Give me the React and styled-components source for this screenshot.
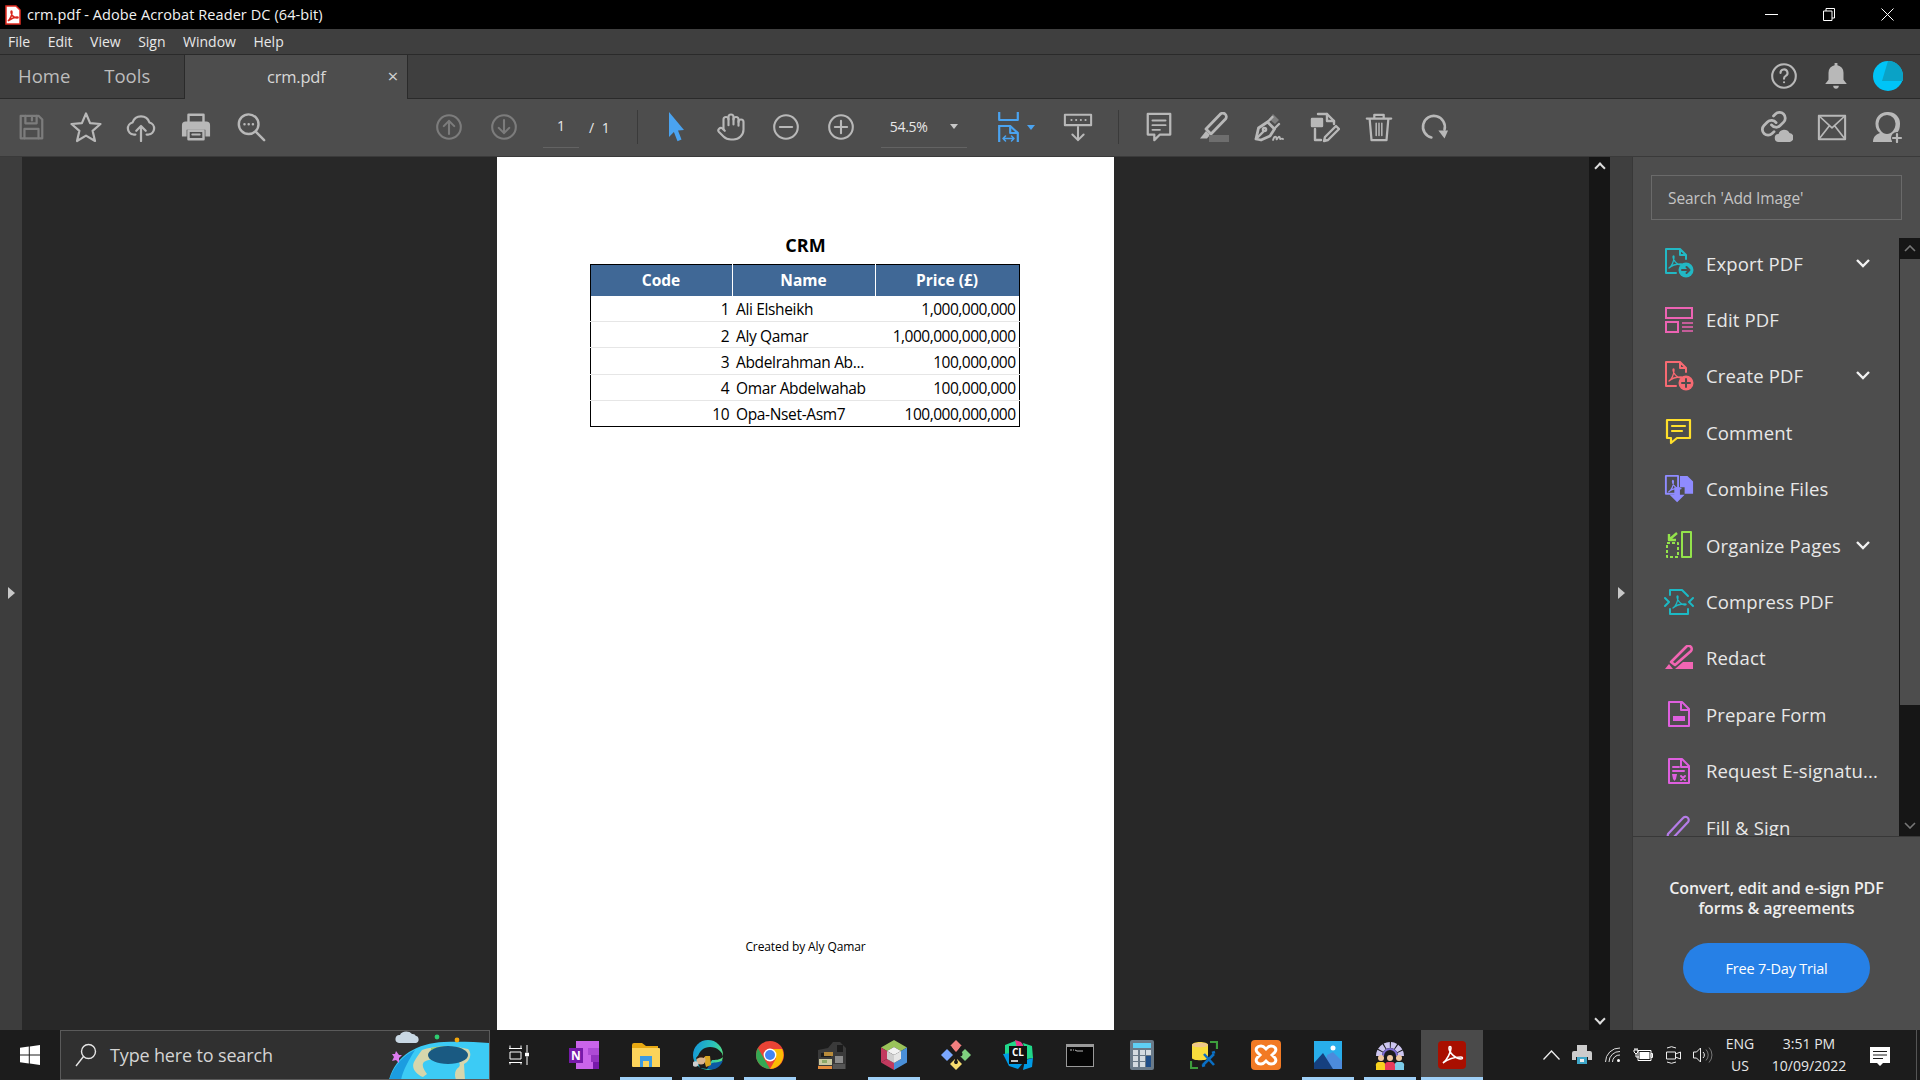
import React from "react"
import styled, { createGlobalStyle } from "styled-components"
import { Hand } from "lucide-react"

const FONT = `"Open Sans", "Noto Sans", sans-serif`

const GlobalStyle = createGlobalStyle`
  html, body {
    margin: 0;
    padding: 0;
    background: #282828;
    font-family: ${FONT};
  }
  * {
    box-sizing: border-box;
  }
`

const Ico = ({ size = 32, w = 32, h = 32, sw = 2.4, children, ...rest }) => (
  <svg
    width={size}
    height={(size * h) / w}
    viewBox={`0 0 ${w} ${h}`}
    fill="none"
    stroke="currentColor"
    strokeWidth={sw}
    strokeLinecap="round"
    strokeLinejoin="round"
    {...rest}
  >
    {children}
  </svg>
)

// toolbar icons
const SaveIcon = () => (
  <Ico size={30}>
    <path d="M5 4h19l4 4v20H5z" />
    <path d="M10 4v8h12V4M9 28V18h15v10M17 6v3" />
  </Ico>
)
const StarIcon = () => (
  <Ico size={32} sw={2.2}>
    <path d="M16 2.5l4.1 9.6 10.4.9-7.9 6.8 2.4 10.2-9-5.4-9 5.4 2.4-10.2L1.5 13l10.4-.9z" />
  </Ico>
)
const UploadIcon = () => (
  <Ico size={30}>
    <path d="M10 24H8a6.5 6.5 0 0 1-1-12.8 9.5 9.5 0 0 1 18 0A6.5 6.5 0 0 1 24 24h-2" />
    <path d="M16 31V15M11 20l5-5 5 5" />
  </Ico>
)
const PrintIcon = () => (
  <Ico size={30} sw={2.6}>
    <path d="M8 11V3h16v8" />
    <path fill="currentColor" stroke="none" d="M5 10h22a4 4 0 0 1 4 4v12h-5v-7H6v7H1V14a4 4 0 0 1 4-4z" />
    <path d="M8 20h16v9H8z" />
    <path d="M12 24h8" strokeWidth={2} />
  </Ico>
)
const FindIcon = () => (
  <Ico size={30} sw={2.6}>
    <circle cx="13.5" cy="13" r="10.5" />
    <path d="M21 21l9 9" />
    <path d="M9 13h.1M13.5 13h.1M18 13h.1" />
  </Ico>
)
const UpIcon = () => (
  <Ico size={28}>
    <circle cx="16" cy="16" r="13.5" />
    <path d="M16 24V9M10 15l6-6 6 6" />
  </Ico>
)
const DownIcon = () => (
  <Ico size={28}>
    <circle cx="16" cy="16" r="13.5" />
    <path d="M16 8v15M10 17l6 6 6-6" />
  </Ico>
)
const CursorIcon = () => (
  <Ico size={32} sw={0}>
    <path fill="#4aa3f0" d="M9 1l15 18-6 .5 3.5 9-4 1.8-3.6-9.3L9 26z" />
  </Ico>
)
const MinusIcon = () => (
  <Ico size={28}>
    <circle cx="16" cy="16" r="13.5" />
    <path d="M9 16h14" />
  </Ico>
)
const PlusIcon = () => (
  <Ico size={28}>
    <circle cx="16" cy="16" r="13.5" />
    <path d="M9 16h14M16 9v14" />
  </Ico>
)
const FitIcon = () => (
  <Ico size={21} w={21} h={30} sw={2.2} style={{ color: "#4aa3f0" }}>
    <path d="M1.2 0v8h18.600V0" strokeLinecap="butt" />
    <path d="M1.2 30V14h11l7.600 7v9" strokeLinecap="butt" strokeLinejoin="miter" />
    <path d="M12.2 14v7h7.600" strokeLinecap="butt" />
    <path d="M5 26.500h11M7.500 24l-2.500 2.500 2.500 2.500M13.500 24l2.500 2.500-2.500 2.500" strokeWidth={1.500} />
  </Ico>
)
const MeasureIcon = () => (
  <Ico size={30} sw={2.2}>
    <path d="M2 3h28v11H2z" />
    <path d="M9 8.5h.1M14 8.5h.1M19 8.5h.1M24 8.5h.1" />
    <path d="M16 16v14M10 24l6 6 6-6" />
  </Ico>
)
const CommentIcon = () => (
  <Ico size={30}>
    <path d="M4 2h24v22H17l-6 6v-6H4z" />
    <path d="M9 9h14M9 14h14M9 19h8" strokeWidth={2} />
  </Ico>
)
const HighlightIcon = () => (
  <Ico size={30} w={30} h={30}>
    <path d="M7 17L21 2.500a3.500 3.500 0 0 1 5.500 4.500L12 22z" strokeWidth={2.800} />
    <path fill="currentColor" stroke="none" d="M7 19l4 4-3 3.500H1z" />
    <path fill="#6e6e6e" stroke="none" d="M10 23h20v7H10z" />
  </Ico>
)
const SignIcon = () => (
  <Ico size={32}>
    <path d="M3 28l2.500-11 9-6 7 7-4.500 7-9 4z" strokeWidth={2.800} />
    <path d="M3 28l7-7" />
    <circle cx="11.500" cy="18.500" r="1.600" />
    <path d="M16 8l4-5 6 6-4 4" fill="#7d7d7d" stroke="none" />
    <path d="M14.500 11l5-5M21 18l5-5" />
    <path d="M20 29c1-3 2-4 3-3s0 3 1 2 1.500-3 2.500-2 0 2 1 2 1.500-1 2.500 0" strokeWidth={1.800} />
  </Ico>
)
const StampIcon = () => (
  <Ico size={32}>
    <path d="M10 3h9l7 7v3" />
    <path d="M19 3v7h7" />
    <path fill="currentColor" d="M4 8h10v7H4z" />
    <path d="M7 18v11h6" />
    <path d="M17 26l11-11 3 3-11 11-4 1z" />
  </Ico>
)
const TrashIcon = () => (
  <Ico size={30}>
    <path d="M3 7h26M11 7V3h10v4M6 7l2 23h16l2-23" />
    <path d="M13 12v13M16 12v13M19 12v13" strokeWidth={1.6} />
  </Ico>
)
const RotateIcon = () => (
  <Ico size={28} sw={3}>
    <path d="M13 28A12.5 12.5 0 1 1 28 19" />
    <path fill="currentColor" stroke="none" d="M21 20h11l-4 9z" />
  </Ico>
)
const LinkIcon = () => (
  <Ico size={32} sw={2.4}>
    <g transform="translate(-1 -1) scale(1.15)">
      <path d="M10 13a5 5 0 0 0 7.54.54l3-3a5 5 0 0 0-7.07-7.07l-1.72 1.71" />
      <path d="M14 11a5 5 0 0 0-7.54-.54l-3 3a5 5 0 0 0 7.07 7.07l1.71-1.71" />
    </g>
    <path fill="currentColor" stroke="none" d="M18 31a4 4 0 0 1-.5-8 6 6 0 0 1 11-1 4.6 4.6 0 0 1 .5 9z" />
  </Ico>
)
const MailIcon = () => (
  <Ico size={30} sw={2.2}>
    <path d="M2 4h28v25H2z" />
    <path d="M2 4l14 13L30 4M2 29l11-14M30 29L19 15" strokeWidth={1.8} />
  </Ico>
)
const UserPlusIcon = () => (
  <Ico size={32} sw={0}>
    <path
      fill="currentColor"
      fillRule="evenodd"
      d="M16 1A11.500 11.500 0 0 0 4.500 13c0 4 1.500 7 4.500 9-3 1-7 3-7 9h19v-7l5-2c2-2 3-5 3-9A11.500 11.500 0 0 0 16 1zM16 4a8.500 8.500 0 0 1 8.500 9c0 5-4 10-8.500 10s-8.500-5-8.500-10A8.500 8.500 0 0 1 16 4z"
    />
    <circle cx="26" cy="27" r="6" fill="#4d4d4d" />
    <path d="M26 23v8M22 27h8" stroke="currentColor" strokeWidth={2.200} />
  </Ico>
)
const HelpIcon = () => (
  <Ico size={28}>
    <circle cx="16" cy="16" r="13.5" />
    <path d="M12 12.5a4 4 0 1 1 6 3.4c-1.5.9-2 1.6-2 3.1M16 23.2h.1" />
  </Ico>
)
const BellIcon = () => (
  <Ico size={30} sw={0}>
    <path fill="currentColor" d="M14.5 2h3v2.4A8 8 0 0 1 24 12.5V20l3.5 4.5h-23L8 20v-7.500a8 8 0 0 1 6.500-8.100z" />
    <path fill="currentColor" d="M13 26.500h6a3 3 0 0 1-6 0z" />
  </Ico>
)
const AvatarIcon = () => (
  <svg width="30" height="30" viewBox="0 0 30 30">
    <circle cx="15" cy="15" r="15" fill="#00c4f7" />
    <path fill="#0aa2c6" d="M15 0a15 15 0 0 1 15 15v5H9z" />
  </svg>
)

// acrobat mark used in the tool icons
const AcroMark = ({ x = 0, y = 0 }) => (
  <path
    transform={`translate(${x} ${y})`}
    d="M1 13c3-2 5-7 5-11 0-1.500-1-1.500-1 0 0 3 4 8 8 8 1.500 0 1.500-1 0-1-4 0-9 1-12 4z"
    strokeWidth="1.300"
  />
)

const PANEL_BG = "#4d4d4d"

const ExportTool = () => (
  <Ico size={30} w={30} h={30} sw={2}>
    <path d="M16 1H2v24h10M16 1l6 6v4M16 1v6h6" />
    <AcroMark x={4} y={7} />
    <circle cx="22" cy="22" r="7.500" fill="currentColor" stroke="none" />
    <path d="M18 22h7M22.500 19l3 3-3 3" stroke={PANEL_BG} />
  </Ico>
)
const EditTool = () => (
  <Ico size={30} w={30} h={30} sw={2} strokeLinecap="butt" strokeLinejoin="miter">
    <path d="M2 3h26v10H2zM2 17h12v10H2z" />
    <path d="M18 18h11M18 22h11M18 26h11" strokeWidth={1.500} />
  </Ico>
)
const CreateTool = () => (
  <Ico size={30} w={30} h={30} sw={2}>
    <path d="M16 1H2v24h10M16 1l6 6v4M16 1v6h6" />
    <AcroMark x={4} y={7} />
    <circle cx="22" cy="22" r="7.500" fill="currentColor" stroke="none" />
    <path d="M18 22h8M22 18v8" stroke={PANEL_BG} />
  </Ico>
)
const CommentTool = () => (
  <Ico size={28} w={28} h={28} sw={2.200}>
    <path d="M2 2h23v18H12l-6 5v-5H2z" />
    <path d="M7 8h13M7 13h10" />
  </Ico>
)
const CombineTool = () => (
  <Ico size={32} w={32} h={32} sw={2}>
    <path d="M2 2h13v19H2z" />
    <AcroMark x={4} y={6} />
    <path fill="currentColor" stroke="none" d="M17 2h8l6 6v13h-9v-7h-5z" />
    <path fill="currentColor" stroke="none" d="M11 14h6v8h5l-8 8-8-8h5z" />
  </Ico>
)
const OrganizeTool = () => (
  <Ico size={28} w={28} h={28} sw={2} strokeLinecap="butt">
    <path d="M17 1h9v25h-9z" />
    <path d="M2 12h11v14H2z" strokeDasharray="3 2" />
    <path d="M12 2l-7 6M4 3v6h7" strokeWidth={2.400} />
  </Ico>
)
const CompressTool = () => (
  <Ico size={30} w={30} h={28} sw={2}>
    <path d="M6 7V2h12l6 6v0M24 21v5H6v-5" />
    <AcroMark x={8} y={7} />
    <path d="M1 10l4 4-4 4M29 10l-4 4 4 4" strokeWidth={2} />
  </Ico>
)
const RedactTool = () => (
  <Ico size={30} w={30} h={26} sw={2}>
    <path d="M7 17L22 2a3 3 0 0 1 5 4L11 20z" strokeWidth={2.600} />
    <path fill="currentColor" stroke="none" d="M1 24l4-5 4 5zM11 24l8-7h10v7z" />
  </Ico>
)
const PrepareTool = () => (
  <Ico size={24} w={24} h={28} sw={2}>
    <path d="M2 2h13l7 7v17H2z" />
    <path d="M14 2v8h8" />
    <path d="M6 16h12v5H6z" fill="currentColor" stroke="none" />
  </Ico>
)
const RequestTool = () => (
  <Ico size={24} w={24} h={28} sw={2}>
    <path d="M2 2h13l7 7v17H2z" />
    <path d="M14 2v8h8M6 10h6M6 14h11" />
    <path fill="currentColor" stroke="none" d="M5 17h5l-1 5-1.500 2-1.500-2z" />
    <path d="M14 19l4 4M18 19l-4 4" />
  </Ico>
)
const FillTool = () => (
  <Ico size={30} w={30} h={30} sw={2.200}>
    <path d="M4 22L19 6a3 3 0 0 1 5 4L9 26l-6 2z" />
    <path d="M15 27h.1M21 27h.1" />
  </Ico>
)

// task bar icons
const WinLogo = () => (
  <svg width="20" height="20" viewBox="0 0 20 20" fill="#fff">
    <path d="M0 2.800L8.800 1.600v8H0zM9.800 1.400L20 0v9.600H9.800zM0 10.500h8.800v8L0 17.200zM9.800 10.500H20V20L9.800 18.600z" />
  </svg>
)
const TaskView = () => (
  <svg width="20" height="20" viewBox="0 0 20 20" fill="none" stroke="#fff" strokeWidth="1">
    <path d="M0 3.500h13M1 .500v3M12 .500v3M1 7h11v7H1zM0 17.500h13M1 17.500v2M12 17.500v2M18 0v7M18 12v8" />
    <path d="M16.500 8h3v3h-3z" fill="#fff" />
  </svg>
)
const OneNote = () => (
  <svg width="30" height="30" viewBox="0 0 30 30">
    <path fill="#ca64ea" d="M7 1h23v28H7z" />
    <path fill="#ae4bd5" d="M19 8h11v7H19z" />
    <path fill="#9332bf" d="M22 15h8v7h-8z" />
    <path fill="#7719aa" d="M24 22h6v7h-6z" />
    <path fill="#7719aa" d="M0 8h14v15H0z" />
    <text x="7" y="20" fill="#fff" fontSize="12" fontWeight="700" textAnchor="middle" fontFamily="Open Sans">N</text>
  </svg>
)
const FolderIcon = () => (
  <svg width="28" height="26" viewBox="0 0 28 26">
    <path fill="#e8a912" d="M0 3a2 2 0 0 1 2-2h8l4 3h12v6H0z" />
    <path fill="#fcd35a" d="M0 6h27a1 1 0 0 1 1 1v18H1a1 1 0 0 1-1-1z" />
    <path fill="#3d9be2" d="M8 14h12v11h-3v-6h-6v6H8z" />
  </svg>
)
const EdgeIcon = () => (
  <svg width="30" height="30" viewBox="0 0 30 30">
    <defs>
      <linearGradient id="edgeA" x1="0" y1="0.300" x2="1" y2="0.600">
        <stop offset="0" stopColor="#1598d8" />
        <stop offset="0.600" stopColor="#2cc4b8" />
        <stop offset="1" stopColor="#5ae07c" />
      </linearGradient>
    </defs>
    <circle cx="15" cy="15" r="15" fill="url(#edgeA)" />
    <path fill="#1c1c1c" d="M5 17c1-6 6-10 12-10 7 0 13 5 13 10-3 3-8 3-11 3l-5 8c-5 1-10-5-9-11z" />
    <path fill="#0c59a4" d="M13 28c8 4 15-1 17-8-4 3-8 2-11 3z" />
    <path fill="#1c1c1c" d="M3 18c3-4 9-4 12 0l2 6-3 5-7-1z" />
    <path fill="#d9a522" d="M10 16h7l1 9-5 2z" />
    <circle cx="8" cy="20" r="4.500" fill="#d9b48f" />
    <path fill="#2a1a12" d="M3.500 19c0-4 6-6 9-3l-2 2c-3-1-5 0-7 1z" />
    <circle cx="2.500" cy="24" r="2.800" fill="#cfcfcf" />
  </svg>
)
const ChromeIcon = () => (
  <svg width="28" height="28" viewBox="0 0 28 28">
    <circle cx="14" cy="14" r="14" fill="#ea4335" />
    <path fill="#34a853" d="M1.900 7L8 17.500 14 28A14 14 0 0 1 1.900 7z" />
    <path fill="#fbbc04" d="M14 8h12.100A14 14 0 0 1 14 28l6-10.500z" />
    <circle cx="14" cy="14" r="6.400" fill="#fff" />
    <circle cx="14" cy="14" r="5" fill="#4285f4" />
  </svg>
)
const GameThumb = () => (
  <svg width="28" height="27" viewBox="0 0 28 27">
    <path fill="#3a3a3a" d="M0 8l10-2 5-6h7l6 6v21H0z" />
    <path fill="#1c1c1c" d="M3 11h10v4H3zM19 3h6v7h-6z" />
    <path fill="#b88b3b" d="M6 10h9v4H6z" />
    <path fill="#c9c9a0" d="M1 17h13v6H1z" />
    <path fill="#8ba868" d="M4 18h5v3H4z" />
    <path fill="#e28b3c" d="M0 24h14v3H0z" />
    <path fill="#8b8b8b" d="M17 14h8v7h-8z" />
    <path fill="#555" d="M15 22h12v5H15z" />
  </svg>
)
const NetBeans = () => (
  <svg width="28" height="30" viewBox="0 0 28 30">
    <path fill="#9ac35a" d="M14 0l13 7.500-6 3.500-7-4-7 4-6-3.500z" />
    <path fill="#c23a5f" d="M1 7.500l6 3.500v8l-6 3.500z" />
    <path fill="#4a90d9" d="M27 7.500v15L14 30v-7l7-4v-8z" />
    <path fill="#c23a5f" d="M1 22.500L7 19l7 4v7z" />
    <path fill="#f2f2f2" d="M14 7l7 4-7 4-7-4z" />
    <path fill="#cfcfcf" d="M7 11l7 4v8l-7-4z" />
    <path fill="#e6e6e6" d="M21 11v8l-7 4v-8z" />
  </svg>
)
const Kraken = () => (
  <svg width="30" height="30" viewBox="0 0 30 30">
    <path fill="#f27f7f" d="M15 0l6 6-6 6-6-6z" />
    <path fill="#7aa7ff" d="M6 9l6 6-6 6-6-6z" />
    <path fill="#7fd17f" d="M24 9l6 6-6 6-6-6z" />
    <path fill="#f7dc6f" d="M15 18l6 6-6 6-6-6z" />
    <path stroke="#1b1b1b" strokeWidth="2" fill="none" d="M9 6l6 9 6-9M15 15v9" />
    <circle cx="19" cy="14" r="2.500" fill="#1b1b1b" />
    <circle cx="15" cy="22" r="2" fill="#1b1b1b" />
  </svg>
)
const CLion = () => (
  <svg width="30" height="30" viewBox="0 0 30 30">
    <path fill="#21d789" d="M2 5l10-4 8 3-6 10-12 2z" />
    <path fill="#ed358c" d="M12 0l6 2 3 5-7 1z" />
    <path fill="#009ae5" d="M0 14l6 12 9 3 5-6-12-10z" />
    <path fill="#21d789" d="M20 3l9 3 1 12-6 1z" />
    <path fill="#009ae5" d="M22 20l8-2-1 9-9 3z" />
    <path fill="#111" d="M6 6h18v18H6z" />
    <text x="15" y="16" fontSize="10" fontWeight="700" fill="#fff" textAnchor="middle" fontFamily="Open Sans">CL</text>
    <path stroke="#fff" strokeWidth="1.500" d="M8 21h7" />
  </svg>
)
const Cmd = () => (
  <svg width="28" height="23" viewBox="0 0 28 23">
    <path fill="#999" d="M0 0h28v23H0z" />
    <path fill="#050505" d="M1 3h26v19H1z" />
    <path stroke="#bbb" strokeWidth="1" fill="none" d="M4 6h2M7 6h1M9 6l2 1h6" />
  </svg>
)
const Calc = () => (
  <svg width="24" height="30" viewBox="0 0 24 30">
    <rect width="24" height="30" rx="2" fill="#6a7a88" />
    <path fill="#5fd0f5" d="M3 3h18v5H3z" />
    <path fill="#d4dbe0" d="M3 10h5v5H3zM10 10h5v5h-5zM16 10h5v5h-5zM3 16h5v5H3zM10 16h5v5h-5zM3 22h5v5H3zM10 22h5v5h-5z" />
    <path fill="#1f4e88" d="M16 16h5v11h-5z" />
  </svg>
)
const DbTool = () => (
  <svg width="28" height="28" viewBox="0 0 28 28">
    <path fill="none" stroke="#3d9e3d" strokeWidth="2.200" d="M20 1h7v7M1 20v7h7" />
    <path fill="#f7dc3c" d="M2 4c0-4 16-4 16 0v13c0 3-16 3-16 0z" />
    <path fill="#f0c88a" d="M2 4c0 3 16 3 16 0s-16-3-16 0z" />
    <path stroke="#0a6fc4" strokeWidth="2.600" fill="none" d="M13 24l11-11M14 13l10 11M22 12l3-1M12 25l3-1" />
  </svg>
)
const Xampp = () => (
  <svg width="30" height="30" viewBox="0 0 30 30">
    <rect width="30" height="30" rx="4" fill="#f27a24" />
    <path fill="none" stroke="#fff" strokeWidth="3" d="M10 6c-4 0-6 3-4 6l3 3-3 3c-2 3 0 6 4 6 3 0 4-2 5-3 1 1 2 3 5 3 4 0 6-3 4-6l-3-3 3-3c2-3 0-6-4-6-3 0-4 2-5 3-1-1-2-3-5-3z" />
  </svg>
)
const Photos = () => (
  <svg width="28" height="28" viewBox="0 0 28 28">
    <path fill="#28aeeb" d="M0 0h28v28H0z" />
    <circle cx="19" cy="7" r="2.500" fill="#fff" />
    <path fill="#4c8bdc" d="M13 14l6-3 9 9v8H10z" />
    <path fill="#16407f" d="M0 22l9-10 10 16H0z" />
  </svg>
)
const PeopleGear = () => (
  <svg width="30" height="30" viewBox="0 0 30 30">
    <path fill="none" stroke="#cdc6f0" strokeWidth="6" strokeDasharray="5 1" d="M4 16a11 11 0 0 1 22 0" />
    <path fill="none" stroke="#7c6bd0" strokeWidth="2" d="M8 16a7 7 0 0 1 14 0" />
    <circle cx="6" cy="18" r="3" fill="#f0c8a0" />
    <circle cx="15" cy="18" r="3" fill="#f0c8a0" />
    <circle cx="24" cy="18" r="3" fill="#f0c8a0" />
    <path fill="#f7d21e" d="M1 30v-4a3 3 0 0 1 3-4h4a3 3 0 0 1 2 4v4z" />
    <path fill="#e83a5b" d="M10 30v-4a3 3 0 0 1 3-4h4a3 3 0 0 1 3 4v4z" />
    <path fill="#7ccbe8" d="M20 30v-4a3 3 0 0 1 2-4h4a3 3 0 0 1 3 4v4z" />
  </svg>
)
const AcrobatTask = () => (
  <svg width="28" height="28" viewBox="0 0 28 28">
    <rect width="28" height="28" rx="4" fill="#a90f00" />
    <path
      fill="none"
      stroke="#fff"
      strokeWidth="1.600"
      d="M5 22c4-3 8-11 8-15 0-2-2-2-2 0 0 5 7 11 12 11 2 0 2-2 0-2-5 0-13 2-18 6z"
    />
  </svg>
)
const SearchGlass = () => (
  <svg width="22" height="24" viewBox="0 0 22 24" fill="none" stroke="#e6e6e6" strokeWidth="1.400">
    <circle cx="13.500" cy="8.500" r="7" />
    <path d="M8.500 13.500L1 23" />
  </svg>
)
const SearchArt = () => (
  <ArtSvg viewBox="0 0 100 50" width="100" height="50">
    <path fill="#3ccbf5" d="M0 50C6 26 28 13 55 12c15-.500 32 0 45 1v37z" />
    <path fill="#1b9de0" d="M0 50C6 34 14 26 26 20c-6 10-12 20-14 30z" />
    <path fill="#d6d6ac" d="M33 20c10-4 30-5 46-1 5 5 1 13-4 15l1 16h-9c-2-6-1-10 3-13 2-3 0-7-6-8-12-2-25 0-29 3-3 3 0 8 3 12l-4 3c-7-3-12-9-9-15 2-4 5-8 8-12z" />
    <path fill="#9bc76e" d="M42 18c10-2 24-2 32 1l2 5c-8-4-24-4-34-1z" />
    <ellipse cx="59" cy="25" rx="20" ry="9" fill="#1a5a82" />
    <path fill="#c9d8e4" d="M10 13a4 4 0 0 1 1-8c1-4 9-5 12-1 3 0 3 1 4 2 3 0 4 6 0 7z" />
    <circle cx="48" cy="7" r="2.400" fill="#2ecc71" />
    <circle cx="68" cy="10" r="2.400" fill="#f5a70a" />
    <path fill="#dd7cf0" d="M7 21l3 4 3 0-3 3 0 5-3-3-4 1 2-4-2-3h3z" />
  </ArtSvg>
)

// tray icons
const Chevron = () => (
  <svg width="17" height="10" viewBox="0 0 17 10" fill="none" stroke="#eee" strokeWidth="1.300">
    <path d="M.5 9.500L8.500 1l8 8.500" />
  </svg>
)
const PrinterTray = () => (
  <svg width="20" height="20" viewBox="0 0 20 20">
    <path fill="#ccc" d="M5 0h10v6H5zM2 6h16a2 2 0 0 1 2 2v7h-4v-3H4v3H0V8a2 2 0 0 1 2-2z" />
    <path fill="#3fa7c9" d="M5 12h10v7H5z" />
    <path fill="#eee" d="M8 14h4v3H8z" />
  </svg>
)
const WifiTray = () => (
  <svg width="16" height="16" viewBox="0 0 16 16" fill="none" stroke="#ddd" strokeWidth="1">
    <path d="M.5 15A14 14 0 0 1 15 1M4 15A10.500 10.500 0 0 1 15 4.500M7.500 15A7 7 0 0 1 15 8" />
    <circle cx="13.500" cy="13.500" r="1.500" fill="#fff" stroke="none" />
  </svg>
)
const BatteryTray = () => (
  <svg width="20" height="14" viewBox="0 0 20 14" fill="none" stroke="#fff" strokeWidth="1">
    <path d="M5 2.500h13v10H5zM18 5.500h1.500v4H18z" />
    <path fill="#fff" stroke="none" d="M6.500 4h10v7h-10z" />
    <path d="M2 0v2M4 0v2M1 2h4v2l-2 2-2-2zM3 6v3h3" />
  </svg>
)
const CameraTray = () => (
  <svg width="15" height="20" viewBox="0 0 15 20" fill="none" stroke="#eee" strokeWidth="1">
    <path d="M.5 7h9v7h-9zM9.500 9l5-2v7l-5-2" />
    <path d="M1 3a9 9 0 0 1 9 0M1 17a9 9 0 0 0 9 0" />
  </svg>
)
const SpeakerTray = () => (
  <svg width="20" height="16" viewBox="0 0 20 16" fill="none" stroke="#eee" strokeWidth="1">
    <path d="M.5 5h3l4-4v14l-4-4h-3z" />
    <path d="M10 5a4 4 0 0 1 0 6" />
    <path d="M13 2.500a8 8 0 0 1 0 11M16 .500a11 11 0 0 1 0 15" stroke="#777" />
  </svg>
)
const NoteTray = () => (
  <svg width="20" height="20" viewBox="0 0 20 20">
    <path fill="#fff" d="M0 0h20v16h-7l-3 3-3-3H0z" />
    <path stroke="#1c1c1c" strokeWidth="1" d="M3 4.500h14M3 8h14M3 11.500h10" />
  </svg>
)
const TitleLogo = () => (
  <svg width="16" height="20" viewBox="0 0 16 20">
    <path fill="#fff" stroke="#e32d22" strokeWidth="1.500" d="M1 1h10l4 4v14H1z" />
    <path
      fill="none"
      stroke="#d9261c"
      strokeWidth="1.500"
      d="M3 16c2-2 4-6 4-9 0-1.500-1-1.500-1 0 0 3 3 6 6 6 1.500 0 1.500-1 0-1-3 0-6 2-9 4z"
    />
  </svg>
)

const menus = ["File", "Edit", "View", "Sign", "Window", "Help"]

const rows = [
  { code: 1, name: "Ali Elsheikh", price: "1,000,000,000" },
  { code: 2, name: "Aly Qamar", price: "1,000,000,000,000" },
  { code: 3, name: "Abdelrahman Ab...", price: "100,000,000" },
  { code: 4, name: "Omar Abdelwahab", price: "100,000,000" },
  { code: 10, name: "Opa-Nset-Asm7", price: "100,000,000,000" },
]

const tools = [
  { label: "Export PDF", color: "#22b8c4", Icon: ExportTool, more: true },
  { label: "Edit PDF", color: "#ec63b3", Icon: EditTool },
  { label: "Create PDF", color: "#f76a72", Icon: CreateTool, more: true },
  { label: "Comment", color: "#ffdf2b", Icon: CommentTool },
  { label: "Combine Files", color: "#8f8bff", Icon: CombineTool },
  { label: "Organize Pages", color: "#93e34b", Icon: OrganizeTool, more: true },
  { label: "Compress PDF", color: "#1cb9c4", Icon: CompressTool },
  { label: "Redact", color: "#f165b3", Icon: RedactTool },
  { label: "Prepare Form", color: "#de5fde", Icon: PrepareTool },
  { label: "Request E-signatu...", color: "#de5fde", Icon: RequestTool },
  { label: "Fill & Sign", color: "#b57ce8", Icon: FillTool },
]

const taskApps = [
  { Icon: OneNote },
  { Icon: FolderIcon, open: true },
  { Icon: EdgeIcon, open: true },
  { Icon: ChromeIcon, open: true },
  { Icon: GameThumb },
  { Icon: NetBeans, open: true },
  { Icon: Kraken },
  { Icon: CLion },
  { Icon: Cmd },
  { Icon: Calc },
  { Icon: DbTool },
  { Icon: Xampp },
  { Icon: Photos, open: true },
  { Icon: PeopleGear, open: true },
  { Icon: AcrobatTask, active: true },
]

const App = () => {
  return (
    <Screen>
      <GlobalStyle />
      <TitleBar>
        <TitleLogo />
        <TitleText>crm.pdf - Adobe Acrobat Reader DC (64-bit)</TitleText>
        <WindowButtons>
          <WindowButton>
            <svg width="13" height="13" viewBox="0 0 13 13" stroke="#fff" strokeWidth="1">
              <path d="M0 6.500h13" />
            </svg>
          </WindowButton>
          <WindowButton>
            <svg width="12" height="13" viewBox="0 0 12 13" fill="none" stroke="#fff" strokeWidth="1">
              <path d="M.5 3h8.500v9.500H.5zM3 3V.500h8.500V10H9" />
            </svg>
          </WindowButton>
          <WindowButton>
            <svg width="13" height="13" viewBox="0 0 13 13" stroke="#fff" strokeWidth="1">
              <path d="M.5.500l12 12M12.500.500l-12 12" />
            </svg>
          </WindowButton>
        </WindowButtons>
      </TitleBar>

      <MenuBar>
        {menus.map((m) => (
          <MenuItem key={m}>{m}</MenuItem>
        ))}
      </MenuBar>

      <TabBar>
        <NavTab>Home</NavTab>
        <NavTab>Tools</NavTab>
        <DocTab>
          <span>crm.pdf</span>
          <TabClose>×</TabClose>
        </DocTab>
        <TabActions>
          <HeadSlot>
            <HelpIcon />
          </HeadSlot>
          <HeadSlot>
            <BellIcon />
          </HeadSlot>
          <HeadSlot>
            <AvatarIcon />
          </HeadSlot>
        </TabActions>
      </TabBar>

      <Toolbar>
        <ToolGroup $ml={3}>
          <ToolSlot $off><SaveIcon /></ToolSlot>
          <ToolSlot><StarIcon /></ToolSlot>
          <ToolSlot><UploadIcon /></ToolSlot>
          <ToolSlot><PrintIcon /></ToolSlot>
          <ToolSlot><FindIcon /></ToolSlot>
        </ToolGroup>
        <ToolGroup $ml={143}>
          <ToolSlot $off><UpIcon /></ToolSlot>
          <ToolSlot $off><DownIcon /></ToolSlot>
        </ToolGroup>
        <PageField>1</PageField>
        <PageTotal>/ 1</PageTotal>
        <ToolDivider $ml={27} />
        <ToolGroup $ml={11}>
          <ToolSlot><CursorIcon /></ToolSlot>
          <ToolSlot><Hand size={30} strokeWidth={1.7} /></ToolSlot>
          <ToolSlot><MinusIcon /></ToolSlot>
          <ToolSlot><PlusIcon /></ToolSlot>
        </ToolGroup>
        <ZoomField>
          <span>54.5%</span>
          <Caret $color="#c8c8c8" />
        </ZoomField>
        <FitButton>
          <FitIcon />
          <Caret $color="#4aa3f0" />
        </FitButton>
        <ToolGroup $ml={13}>
          <ToolSlot><MeasureIcon /></ToolSlot>
        </ToolGroup>
        <ToolDivider $ml={12} />
        <ToolGroup $ml={13}>
          <ToolSlot><CommentIcon /></ToolSlot>
          <ToolSlot><HighlightIcon /></ToolSlot>
          <ToolSlot><SignIcon /></ToolSlot>
          <ToolSlot><StampIcon /></ToolSlot>
          <ToolSlot><TrashIcon /></ToolSlot>
          <ToolSlot><RotateIcon /></ToolSlot>
        </ToolGroup>
        <ToolGroup $right>
          <ToolSlot><LinkIcon /></ToolSlot>
          <ToolSlot><MailIcon /></ToolSlot>
          <ToolSlot><UserPlusIcon /></ToolSlot>
        </ToolGroup>
      </Toolbar>

      <Main>
        <SideRail>
          <SideArrow />
        </SideRail>
        <DocArea>
          <Page>
            <PageTitle>CRM</PageTitle>
            <Table>
              <thead>
                <tr>
                  <HeadCell $w={142}>Code</HeadCell>
                  <HeadCell $w={143}>Name</HeadCell>
                  <HeadCell>Price (£)</HeadCell>
                </tr>
              </thead>
              <tbody>
                {rows.map((r) => (
                  <tr key={r.code}>
                    <Cell $num>{r.code}</Cell>
                    <Cell>{r.name}</Cell>
                    <Cell $num>{r.price}</Cell>
                  </tr>
                ))}
              </tbody>
            </Table>
            <PageFooter>Created by Aly Qamar</PageFooter>
          </Page>
        </DocArea>
        <DocScroll>
          <ScrollChevron />
          <ScrollChevron $down />
        </DocScroll>
        <PaneGap>
          <SideArrow />
        </PaneGap>
        <ToolsPanel>
          <SearchBox>Search 'Add Image'</SearchBox>
          <ToolListWrap>
            <ToolList>
              {tools.map(({ label, color, Icon, more }) => (
                <ToolRow key={label}>
                  <ToolIconBox $color={color}>
                    <Icon />
                  </ToolIconBox>
                  <ToolLabel>{label}</ToolLabel>
                  {more && (
                    <svg width="14" height="9" viewBox="0 0 14 9" fill="none" stroke="#f2f2f2" strokeWidth="2.400">
                      <path d="M1 1l6 6 6-6" />
                    </svg>
                  )}
                </ToolRow>
              ))}
            </ToolList>
            <PanelScroll>
              <PanelScrollBtn>
                <svg width="12" height="7" viewBox="0 0 12 7" fill="none" stroke="#777" strokeWidth="1.600">
                  <path d="M1 6l5-5 5 5" />
                </svg>
              </PanelScrollBtn>
              <PanelThumb />
              <PanelScrollBtn $end>
                <svg width="12" height="7" viewBox="0 0 12 7" fill="none" stroke="#777" strokeWidth="1.600">
                  <path d="M1 1l5 5 5-5" />
                </svg>
              </PanelScrollBtn>
            </PanelScroll>
          </ToolListWrap>
          <Promo>
            <PromoText>
              Convert, edit and e-sign PDF
              <br />
              forms &amp; agreements
            </PromoText>
            <TrialButton>Free 7-Day Trial</TrialButton>
          </Promo>
        </ToolsPanel>
      </Main>

      <Taskbar>
        <StartButton>
          <WinLogo />
        </StartButton>
        <TaskSearch>
          <SearchGlass />
          <TaskSearchText>Type here to search</TaskSearchText>
          <SearchArt />
        </TaskSearch>
        <TaskViewButton>
          <TaskView />
        </TaskViewButton>
        {taskApps.map(({ Icon, open, active }, i) => (
          <TaskItem key={i} $open={open} $active={active}>
            <Icon />
          </TaskItem>
        ))}
        <Tray>
          <Chevron />
          <PrinterTray />
          <WifiTray />
          <BatteryTray />
          <CameraTray />
          <SpeakerTray />
        </Tray>
        <TrayText $w={40} $ml={7}>
          <span>ENG</span>
          <span>US</span>
        </TrayText>
        <TrayText $w={90} $ml={4}>
          <span>3:51 PM</span>
          <span>10/09/2022</span>
        </TrayText>
        <NoteSlot>
          <NoteTray />
        </NoteSlot>
      </Taskbar>
    </Screen>
  )
}

const Screen = styled.div`
  width: 1920px;
  height: 1080px;
  display: flex;
  flex-direction: column;
  overflow: hidden;
  background: #282828;
  color: #e6e6e6;
`

const TitleBar = styled.header`
  height: 29px;
  flex: none;
  background: #000;
  display: flex;
  align-items: center;
  padding-left: 5px;
`

const TitleText = styled.span`
  margin-left: 6px;
  color: #f2f2f2;
  font-size: 14.5px;
  letter-spacing: 0.09px;
  white-space: nowrap;
`

const WindowButtons = styled.div`
  margin-left: auto;
  padding-right: 4px;
  display: flex;
`

const WindowButton = styled.div`
  width: 58px;
  height: 29px;
  display: flex;
  align-items: center;
  justify-content: center;
`

const MenuBar = styled.nav`
  height: 26px;
  flex: none;
  background: #3f3f3f;
  border-bottom: 1px solid #2a2a2a;
  display: flex;
  align-items: center;
  gap: 17.5px;
  padding-left: 8px;
`

const MenuItem = styled.span`
  font-size: 14px;
  color: #e8e8e8;
`

const TabBar = styled.div`
  height: 44px;
  flex: none;
  background: #3f3f3f;
  border-bottom: 1px solid #2a2a2a;
  display: flex;
  align-items: stretch;
  padding-left: 18px;
`

const NavTab = styled.div`
  font-size: 18.5px;
  color: #bdbdbd;
  display: flex;
  align-items: center;
  margin-right: 34px;
  padding-bottom: 2px;
`

const DocTab = styled.div`
  position: relative;
  width: 224px;
  margin: 0 0 -1px 0;
  padding-bottom: 2px;
  background: #4d4d4d;
  border-left: 1px solid #2a2a2a;
  border-right: 1px solid #2a2a2a;
  display: flex;
  align-items: center;
  justify-content: center;
  font-size: 16.5px;
  color: #d8d8d8;
  letter-spacing: -0.2px;
`

const TabClose = styled.span`
  position: absolute;
  right: 9px;
  top: 8px;
  font-size: 19px;
  color: #d0d0d0;
`

const TabActions = styled.div`
  margin-left: auto;
  padding: 0 6px 2px 0;
  display: flex;
  align-items: center;
`

const HeadSlot = styled.div`
  width: 52px;
  display: flex;
  justify-content: center;
  color: #b8b8b8;
`

const Toolbar = styled.div`
  height: 58px;
  flex: none;
  background: #4d4d4d;
  border-bottom: 1px solid #3a3a3a;
  display: flex;
  align-items: center;
  padding: 0 6px 1px 0;
`

const ToolGroup = styled.div`
  display: flex;
  align-items: center;
  margin-left: ${(p) => (p.$right ? "auto" : `${p.$ml}px`)};
`

const ToolSlot = styled.div`
  width: 55px;
  height: 40px;
  display: flex;
  align-items: center;
  justify-content: center;
  color: ${(p) => (p.$off ? "#7c7c7c" : "#b8b8b8")};
`

const PageField = styled.div`
  width: 36px;
  height: 36px;
  margin: 6px 0 0 12px;
  padding-top: 1px;
  border-bottom: 1px solid #636363;
  font-size: 14px;
  line-height: 26px;
  text-align: center;
  color: #e8e8e8;
`

const PageTotal = styled.div`
  margin-left: 10px;
  font-size: 14px;
  word-spacing: 4px;
  color: #e8e8e8;
`

const ToolDivider = styled.div`
  width: 1px;
  height: 34px;
  margin-left: ${(p) => p.$ml}px;
  background: #3a3a3a;
`

const ZoomField = styled.div`
  width: 86px;
  height: 36px;
  margin: 6px 2px 0 12px;
  padding: 0 9px 6px 9px;
  border-bottom: 1px solid #636363;
  display: flex;
  align-items: center;
  justify-content: space-between;
  font-size: 14px;
  color: #e8e8e8;
  letter-spacing: -0.3px;
`

const Caret = styled.i`
  display: block;
  width: 0;
  height: 0;
  border-left: 4px solid transparent;
  border-right: 4px solid transparent;
  border-top: 5px solid ${(p) => p.$color};
`

const FitButton = styled.div`
  margin-left: 29px;
  width: 40px;
  display: flex;
  align-items: center;
  gap: 8px;
`

const Main = styled.main`
  flex: 1;
  min-height: 0;
  display: flex;
`

const SideRail = styled.div`
  width: 22px;
  flex: none;
  background: #3d3d3d;
  display: flex;
  align-items: center;
  justify-content: center;
`

const SideArrow = styled.i`
  display: block;
  width: 0;
  height: 0;
  border-top: 6px solid transparent;
  border-bottom: 6px solid transparent;
  border-left: 7px solid #c8c8c8;
  margin-bottom: 2px;
`

const DocArea = styled.div`
  flex: 1;
  display: flex;
  justify-content: center;
  background: #282828;
`

const Page = styled.div`
  width: 617px;
  background: #fff;
  display: flex;
  flex-direction: column;
  align-items: center;
  padding: 76px 0 75px;
  color: #000;
`

const PageTitle = styled.h1`
  margin: 0 0 7px;
  font-size: 18px;
  line-height: 24px;
  font-weight: 700;
`

const Table = styled.table`
  width: 430px;
  margin-right: 2px;
  table-layout: fixed;
  border-collapse: collapse;
  border: 1.5px solid #000;
  font-size: 15.5px;
`

const HeadCell = styled.th`
  height: 31px;
  padding: 0;
  width: ${(p) => (p.$w ? `${p.$w}px` : "auto")};
  background: #406896;
  color: #fff;
  font-size: 15.5px;
  font-weight: 700;
  text-align: center;
  border-left: 1px solid #fff;
  &:first-child {
    border-left: none;
  }
`

const Cell = styled.td`
  height: 26.2px;
  padding: 2px 3px 0 4px;
  text-align: ${(p) => (p.$num ? "right" : "left")};
  border-top: 1px solid #e6e6e6;
  white-space: nowrap;
  letter-spacing: ${(p) => (p.$num ? "-0.5px" : "-0.35px")};
  overflow: hidden;
  tr:first-child & {
    border-top: none;
  }
`

const PageFooter = styled.div`
  margin-top: auto;
  font-size: 12px;
  letter-spacing: -0.1px;
`

const DocScroll = styled.div`
  width: 21px;
  flex: none;
  background: #161616;
  display: flex;
  flex-direction: column;
  justify-content: space-between;
  align-items: center;
  padding: 7px 0;
`

const ScrollChevron = styled.i`
  display: block;
  width: 8px;
  height: 8px;
  border-left: 2px solid #ddd;
  border-top: 2px solid #ddd;
  transform: ${(p) => (p.$down ? "rotate(225deg)" : "rotate(45deg)")};
`

const PaneGap = styled.div`
  width: 23px;
  flex: none;
  background: #3f3f3f;
  border-right: 1px solid #383838;
  display: flex;
  align-items: center;
  justify-content: center;
`

const ToolsPanel = styled.aside`
  width: 287px;
  flex: none;
  background: ${PANEL_BG};
  display: flex;
  flex-direction: column;
`

const SearchBox = styled.div`
  height: 45px;
  flex: none;
  margin: 18px 18px 15px 18px;
  padding-left: 16px;
  border: 1px solid #6a6a6a;
  display: flex;
  align-items: center;
  font-size: 15.5px;
  color: #c4c4c4;
  letter-spacing: -0.1px;
`

const ToolListWrap = styled.div`
  height: 601px;
  flex: none;
  display: flex;
  overflow: hidden;
`

const ToolList = styled.div`
  flex: 1;
  min-width: 0;
`

const ToolRow = styled.div`
  height: 56.4px;
  display: flex;
  align-items: center;
  padding: 0 29px 0 31px;
`

const ToolIconBox = styled.div`
  width: 30px;
  height: 32px;
  flex: none;
  display: flex;
  align-items: center;
  justify-content: center;
  color: ${(p) => p.$color};
`

const ToolLabel = styled.span`
  margin-left: 12px;
  flex: 1;
  font-size: 18.5px;
  color: #e8e8e8;
  letter-spacing: 0.15px;
  white-space: nowrap;
`

const PanelScroll = styled.div`
  width: 21px;
  flex: none;
  margin-top: 3px;
  background: #161616;
  display: flex;
  flex-direction: column;
`

const PanelScrollBtn = styled.div`
  height: 21px;
  flex: none;
  margin-top: ${(p) => (p.$end ? "auto" : "0")};
  display: flex;
  align-items: center;
  justify-content: center;
`

const PanelThumb = styled.div`
  height: 446px;
  flex: none;
  background: ${PANEL_BG};
  border-left: 1px solid #161616;
`

const Promo = styled.div`
  flex: 1;
  border-top: 1px solid #383838;
  display: flex;
  flex-direction: column;
  align-items: center;
  padding-top: 41px;
`

const PromoText = styled.p`
  margin: 0;
  font-size: 16px;
  line-height: 20px;
  font-weight: 600;
  text-align: center;
  color: #efefef;
  letter-spacing: -0.1px;
`

const TrialButton = styled.div`
  width: 187px;
  height: 50px;
  margin-top: 25px;
  border-radius: 25px;
  background: #2680e6;
  display: flex;
  align-items: center;
  justify-content: center;
  font-size: 14.5px;
  color: #fff;
  letter-spacing: -0.2px;
`

const Taskbar = styled.footer`
  height: 50px;
  flex: none;
  background: #1c1c1c;
  display: flex;
  align-items: stretch;
`

const StartButton = styled.div`
  width: 60px;
  flex: none;
  display: flex;
  align-items: center;
  padding-left: 20px;
`

const TaskSearch = styled.div`
  width: 430px;
  flex: none;
  background: #303030;
  border: 1px solid #5a5a5a;
  display: flex;
  align-items: center;
  padding-left: 14px;
  position: relative;
  overflow: hidden;
`

const TaskSearchText = styled.span`
  margin-left: 13px;
  font-size: 18px;
  color: #d4d4d4;
  letter-spacing: -0.15px;
`

const ArtSvg = styled.svg`
  margin-left: auto;
  flex: none;
`

const TaskViewButton = styled.div`
  width: 63px;
  flex: none;
  display: flex;
  align-items: center;
  justify-content: center;
  padding-right: 6px;
`

const TaskItem = styled.div`
  position: relative;
  width: 62px;
  flex: none;
  display: flex;
  align-items: center;
  justify-content: center;
  background: ${(p) => (p.$active ? "#4a4a4a" : "transparent")};
  &::after {
    content: "";
    display: ${(p) => (p.$open || p.$active ? "block" : "none")};
    position: absolute;
    left: ${(p) => (p.$active ? "0" : "5px")};
    right: ${(p) => (p.$active ? "0" : "5px")};
    bottom: 0;
    height: 3px;
    background: #9fd0f7;
  }
`

const Tray = styled.div`
  margin-left: 60px;
  width: 170px;
  flex: none;
  display: flex;
  align-items: center;
  justify-content: space-between;
`

const TrayText = styled.div`
  width: ${(p) => p.$w}px;
  margin-left: ${(p) => p.$ml}px;
  flex: none;
  display: flex;
  flex-direction: column;
  align-items: center;
  justify-content: center;
  font-size: 14px;
  line-height: 22px;
  color: #e8e8e8;
`

const NoteSlot = styled.div`
  margin-left: 16px;
  width: 47px;
  flex: none;
  display: flex;
  align-items: center;
  padding-top: 3px;
  border-right: 1px solid #555;
  margin-right: 5px;
`

export default App
